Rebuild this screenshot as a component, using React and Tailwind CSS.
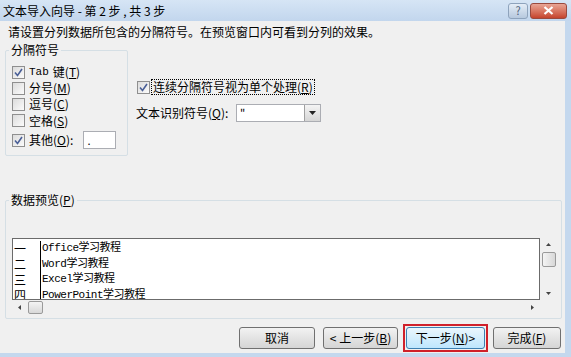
const font = { fontFamily: '"Noto Sans CJK SC", "Liberation Sans", sans-serif' };

function Check({ checked }) {
  return (
    <span className="w-[13px] h-[13px] border border-[#8f8f8f] bg-gradient-to-br from-[#dcdcdc] to-[#fbfbfb] flex items-center justify-center shrink-0">
      {checked && (
        <svg width="9" height="9" viewBox="0 0 9 9">
          <path d="M1 4.5 L3.5 7.5 L8 1" stroke="#4a5f97" strokeWidth="1.6" fill="none" />
        </svg>
      )}
    </span>
  );
}

function Mn({ k }) {
  return (
    <span>
      (<span className="underline">{k}</span>)
    </span>
  );
}

function Btn({ children, hot, w }) {
  return (
    <div className={hot ? "p-[1px] border-2 border-[#d0202a]" : "p-[3px]"}>
      <div
        className={
          "h-[22px] rounded-[3px] border flex items-center justify-center text-[12px] text-black " +
          (hot
            ? "border-[#3c7fb1] bg-gradient-to-b from-[#eaf6fd] to-[#bee6fd]"
            : "border-[#707070] bg-gradient-to-b from-[#f2f2f2] to-[#d5d5d5]")
        }
        style={{ width: w }}
      >
        {children}
      </div>
    </div>
  );
}

export default function App() {
  const rows = [
    ["一", "Office学习教程"],
    ["二", "Word学习教程"],
    ["三", "Excel学习教程"],
    ["四", "PowerPoint学习教程"],
  ];
  return (
    <div className="w-[571px] h-[357px] overflow-hidden bg-[#c4d8ee] flex flex-col text-black" style={font}>
      {/* title bar */}
      <div className="h-[21px] shrink-0 bg-gradient-to-b from-[#d6e5f5] to-[#c2d6ed] flex items-center pl-[3px] pr-[4px]">
        <span className="text-[12px] leading-none flex-1 whitespace-pre">文本导入向导 - 第 2 步 , 共 3 步</span>
        <div className="flex gap-[2px] items-center">
          <div className="w-[20px] h-[16px] rounded-[3px] border border-[#8ea3bc] bg-gradient-to-b from-[#e4edf7] to-[#b7c9de] flex items-center justify-center text-[11px] leading-none text-[#4d6078]">
            ?
          </div>
          <div className="w-[37px] h-[16px] rounded-[3px] border border-[#9a4a3e] bg-gradient-to-b from-[#e8a595] to-[#c5432c] flex items-center justify-center">
            <svg width="11" height="9" viewBox="0 0 11 9">
              <path d="M1.5 1 L9.5 8 M9.5 1 L1.5 8" stroke="#fff" strokeWidth="2.2" />
            </svg>
          </div>
        </div>
      </div>

      {/* body */}
      <div className="flex-1 bg-[#f0f0f0] mr-[6px] mb-[4px] flex flex-col text-[12px]">
        <div className="pl-[8px] pt-[3px] h-[20px] leading-[16px]">请设置分列数据所包含的分隔符号。在预览窗口内可看到分列的效果。</div>

        <div className="flex pt-[2px]">
          {/* delimiter group */}
          <div className="ml-[5px] w-[123px] relative mt-[7px] h-[106px] border border-[#d5dfe5] rounded-[2px]">
            <span className="absolute -top-[9px] left-[3px] px-[2px] bg-[#f0f0f0] leading-[16px]">分隔符号</span>
            <div className="flex flex-col pt-[13px] pl-[6px]">
              <div className="flex items-center gap-[4px] h-[16px]">
                <Check checked />
                <span style={{ fontFamily: '"Liberation Mono", "Noto Sans CJK SC", monospace' }} className="text-[11px]">Tab</span>
                <span>键<Mn k="T" /></span>
              </div>
              <div className="flex items-center gap-[4px] h-[16px]">
                <Check />
                <span>分号<Mn k="M" /></span>
              </div>
              <div className="flex items-center gap-[4px] h-[16px]">
                <Check />
                <span>逗号<Mn k="C" /></span>
              </div>
              <div className="flex items-center gap-[4px] h-[17px]">
                <Check />
                <span>空格<Mn k="S" /></span>
              </div>
              <div className="flex items-center gap-[4px] h-[20px] mt-[1px]">
                <Check checked />
                <span>其他<Mn k="O" />:</span>
                <span className="ml-[6px] w-[33px] h-[18px] bg-white border border-[#abadb3] text-[11px] leading-[16px] pl-[3px]">.</span>
              </div>
            </div>
          </div>

          {/* right options */}
          <div className="ml-[9px] pt-[36px] flex flex-col">
            <div className="flex items-center gap-[1px]">
              <Check checked />
              <span className="border border-dotted border-black px-[1px] leading-[14px]">
                连续分隔符号视为单个处理<Mn k="R" />
              </span>
            </div>
            <div className="flex items-center mt-[9px] -ml-[1px]">
              <span className="w-[100px]">文本识别符号<Mn k="Q" />:</span>
              <div className="w-[85px] h-[18px] bg-white border border-[#abadb3] flex">
                <span className="flex-1 pl-[3px] leading-[14px] text-[11px]">"</span>
                <div className="w-[16px] h-full border-l border-[#a0a0a0] bg-gradient-to-b from-[#f4f4f4] to-[#d6d6d6] flex items-center justify-center">
                  <svg width="7" height="4" viewBox="0 0 7 4">
                    <path d="M0 0 H7 L3.5 4 Z" fill="#222" />
                  </svg>
                </div>
              </div>
            </div>
          </div>
        </div>

        {/* preview group */}
        <div className="ml-[5px] mr-[3px] mt-[44px] h-[119px] relative border border-[#d5dfe5] rounded-[2px]">
          <span className="absolute -top-[9px] left-[3px] px-[2px] bg-[#f0f0f0] leading-[16px]">数据预览<Mn k="P" /></span>
          <div className="flex pl-[6px] pt-[37px]">
            <div className="flex flex-col">
              <div className="w-[528px] h-[62px] bg-white border border-[#6b6b6b] overflow-hidden flex flex-col pt-[2px]">
                {rows.map(([a, b]) => (
                  <div key={a} className="flex h-[15.5px] items-center shrink-0">
                    <span className="w-[27px] pl-[1px] text-[12px] leading-none">{a}</span>
                    <span className="h-full border-l border-black" />
                    <span
                      className="pl-[1px] text-[11px] leading-none"
                      style={{ fontFamily: '"Liberation Mono", "Noto Sans CJK SC", monospace', letterSpacing: '-0.5px' }}
                    >
                      {b}
                    </span>
                  </div>
                ))}
              </div>
              {/* horizontal scrollbar */}
              <div className="h-[15px] flex items-center">
                <svg width="16" height="15" viewBox="0 0 16 15">
                  <path d="M6 7.5 L9 5 V10 Z" fill="#444" />
                </svg>
                <div className="w-[15px] h-[13px] rounded-[2px] border border-[#9a9a9a] bg-gradient-to-b from-[#f4f4f4] to-[#d8d8d8]" />
                <div className="flex-1" />
                <svg width="16" height="15" viewBox="0 0 16 15">
                  <path d="M10 7.5 L7 5 V10 Z" fill="#444" />
                </svg>
              </div>
            </div>
            {/* vertical scrollbar */}
            <div className="w-[17px] h-[62px] flex flex-col items-center">
              <svg width="15" height="14" viewBox="0 0 15 14">
                <path d="M7.5 5 L10 8 H5 Z" fill="#444" />
              </svg>
              <div className="w-[14px] h-[15px] rounded-[2px] border border-[#9a9a9a] bg-gradient-to-r from-[#f4f4f4] to-[#d8d8d8]" />
              <div className="flex-1" />
              <svg width="15" height="14" viewBox="0 0 15 14">
                <path d="M7.5 9 L10 6 H5 Z" fill="#444" />
              </svg>
            </div>
          </div>
        </div>

        {/* buttons */}
        <div className="flex justify-end items-center pr-[1px] mt-[5px] gap-[2px]">
          <Btn w={76}>取消</Btn>
          <Btn w={75}>&lt; 上一步<Mn k="B" /></Btn>
          <Btn w={79} hot>下一步<Mn k="N" /> &gt;</Btn>
          <Btn w={68}>完成<Mn k="F" /></Btn>
        </div>
      </div>
    </div>
  );
}
